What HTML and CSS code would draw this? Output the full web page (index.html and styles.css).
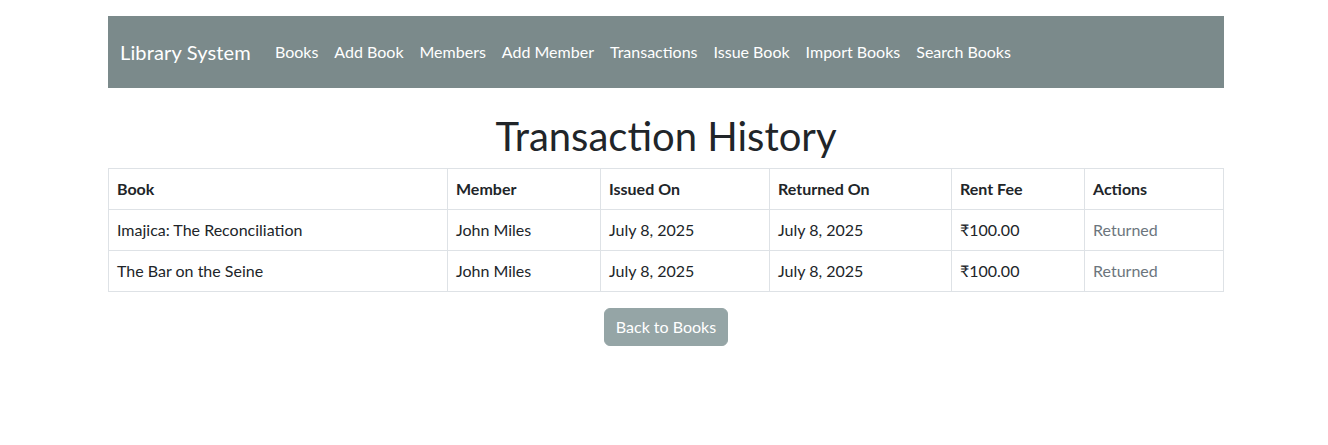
FILE: index.html
```html
<!DOCTYPE html>
<html lang="en">
<head>
<meta charset="utf-8">
<title>Transaction History</title>
<link rel="stylesheet" href="styles.css">
</head>
<body>
<div class="page">
  <nav class="navbar">
    <a class="brand" href="#">Library System</a>
    <ul class="nav">
      <li><a href="#">Books</a></li>
      <li><a href="#">Add Book</a></li>
      <li><a href="#">Members</a></li>
      <li><a href="#">Add Member</a></li>
      <li><a href="#">Transactions</a></li>
      <li><a href="#">Issue Book</a></li>
      <li><a href="#">Import Books</a></li>
      <li><a href="#">Search Books</a></li>
    </ul>
  </nav>
  <h1 class="title">Transaction History</h1>
  <table class="table">
    <thead>
      <tr>
        <th class="c-book">Book</th>
        <th class="c-member">Member</th>
        <th class="c-issued">Issued On</th>
        <th class="c-returned">Returned On</th>
        <th class="c-fee">Rent Fee</th>
        <th class="c-actions">Actions</th>
      </tr>
    </thead>
    <tbody>
      <tr>
        <td>Imajica: The Reconciliation</td>
        <td>John Miles</td>
        <td>July 8, 2025</td>
        <td>July 8, 2025</td>
        <td>₹100.00</td>
        <td class="muted">Returned</td>
      </tr>
      <tr>
        <td>The Bar on the Seine</td>
        <td>John Miles</td>
        <td>July 8, 2025</td>
        <td>July 8, 2025</td>
        <td>₹100.00</td>
        <td class="muted">Returned</td>
      </tr>
    </tbody>
  </table>
  <div class="actions">
    <a class="btn" href="#">Back to Books</a>
  </div>
</div>
</body>
</html>
```

FILE: styles.css
```css
* { box-sizing: border-box; }
html, body { margin: 0; }
body {
  padding: 16px 0 0 4px;
  background: #fff;
  color: #212529;
  font-family: Lato, "Open Sans", "Liberation Sans", sans-serif;
  font-size: 16px;
  line-height: 1.5;
}
.page {
  width: 1116px;
  margin: 0 auto;
}
.navbar {
  display: flex;
  align-items: center;
  background: #7b8a8b;
  padding: 16px 12px;
  margin-bottom: 24px;
}
.brand {
  color: #fff;
  text-decoration: none;
  font-size: 20px;
  letter-spacing: 0.15px;
  line-height: 30px;
  padding: 5px 0;
  margin-right: 16px;
}
.nav {
  display: flex;
  list-style: none;
  margin: 0;
  padding: 0;
}
.nav a {
  display: block;
  color: #fff;
  text-decoration: none;
  padding: 8px;
  line-height: 24px;
}
.title {
  margin: 0 0 8px;
  text-align: center;
  font-size: 40px;
  font-weight: 400;
  line-height: 48px;
  color: #212529;
}
.table {
  width: 100%;
  border-collapse: collapse;
  margin-bottom: 16px;
}
.table th, .table td {
  border: 1px solid #dee2e6;
  padding: 8px;
  text-align: left;
  vertical-align: top;
  line-height: 24px;
}
.table th { font-weight: 700; }
.c-book { width: 339px; }
.c-member { width: 153px; }
.c-issued { width: 169px; }
.c-returned { width: 182px; }
.c-fee { width: 133px; }
.muted { color: #6c757d; }
.actions {
  display: flex;
  justify-content: center;
}
.btn {
  display: inline-block;
  background: #95a5a6;
  border: 1px solid #95a5a6;
  color: #fff;
  text-decoration: none;
  padding: 6px 11px;
  border-radius: 6px;
  line-height: 24px;
  font-size: 16px;
}
```
